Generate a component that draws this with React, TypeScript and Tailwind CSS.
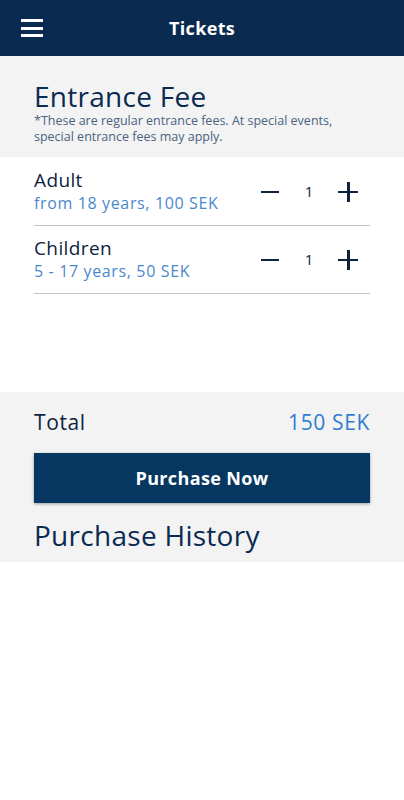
import { useState } from "react";

const font = { fontFamily: "'Open Sans', Lato, sans-serif" };

function Row({ title, sub, count, onMinus, onPlus }: { title: string; sub: string; count: number; onMinus: () => void; onPlus: () => void }) {
  return (
    <div className="flex items-center justify-between border-b border-[#c4c4c4] h-[68px]">
      <div className="flex flex-col">
        <span className="text-[19px] leading-[23px] tracking-[0.02em] text-[#0d2340]">{title}</span>
        <span className="text-[16px] leading-[22px] tracking-[0.04em] text-[#4a88cc]">{sub}</span>
      </div>
      <div className="flex items-center mr-[12px]">
        <button onClick={onMinus} className="w-[20px] h-[20px] flex items-center justify-center">
          <span className="block w-[18px] h-[2px] bg-[#0d2340]" />
        </button>
        <span className="w-[58px] text-center text-[15px] text-[#0d2340]">{count}</span>
        <button onClick={onPlus} className="w-[20px] h-[20px] relative">
          <span className="absolute left-0 top-[9px] w-[20px] h-[2.5px] bg-[#0d2340]" />
          <span className="absolute top-0 left-[9px] h-[20px] w-[2.5px] bg-[#0d2340]" />
        </button>
      </div>
    </div>
  );
}

export default function App() {
  const [adult, setAdult] = useState(1);
  const [kids, setKids] = useState(1);
  const total = adult * 100 + kids * 50;

  return (
    <div className="w-[404px] h-[800px] bg-white flex flex-col" style={font}>
      {/* Header */}
      <div className="h-[56px] bg-[#0a2a50] flex items-center relative shrink-0">
        <button className="ml-[21px] flex flex-col gap-[4.5px]">
          <span className="block w-[22px] h-[3px] bg-white" />
          <span className="block w-[22px] h-[3px] bg-white" />
          <span className="block w-[22px] h-[3px] bg-white" />
        </button>
        <span className="absolute left-0 right-0 text-center text-white font-bold text-[18px] tracking-[0.02em] pointer-events-none">Tickets</span>
      </div>

      {/* Entrance fee intro */}
      <div className="bg-[#f3f3f3] px-[34px] pt-[23px] pb-[12px]">
        <h1 className="text-[28px] leading-[34px] tracking-[0.01em] text-[#0b2a52]">Entrance Fee</h1>
        <p className="text-[12.5px] leading-[16px] text-[#4a6280] pr-[10px]">
          *These are regular entrance fees. At special events, special entrance fees may apply.
        </p>
      </div>

      {/* Rows */}
      <div className="px-[34px] h-[235px] pt-[1px]">
        <Row title="Adult" sub="from 18 years, 100 SEK" count={adult} onMinus={() => setAdult(Math.max(0, adult - 1))} onPlus={() => setAdult(adult + 1)} />
        <Row title="Children" sub="5 - 17 years, 50 SEK" count={kids} onMinus={() => setKids(Math.max(0, kids - 1))} onPlus={() => setKids(kids + 1)} />
      </div>

      {/* Total + purchase */}
      <div className="bg-[#f3f3f3] px-[34px] pt-[16px] pb-[10px]">
        <div className="flex items-center justify-between h-[30px]">
          <span className="text-[21px] tracking-[0.03em] text-[#0d2340]">Total</span>
          <span className="text-[21px] tracking-[0.03em] text-[#2f7dd0]">{total} SEK</span>
        </div>
        <button className="mt-[15px] w-full h-[50px] bg-[#053761] text-white font-bold text-[18px] tracking-[0.02em] shadow-[0_1px_3px_rgba(0,0,0,0.35)]">
          Purchase Now
        </button>
        <h2 className="mt-[15px] text-[28px] leading-[34px] tracking-[0.01em] text-[#0b2a52]">Purchase History</h2>
      </div>
    </div>
  );
}
